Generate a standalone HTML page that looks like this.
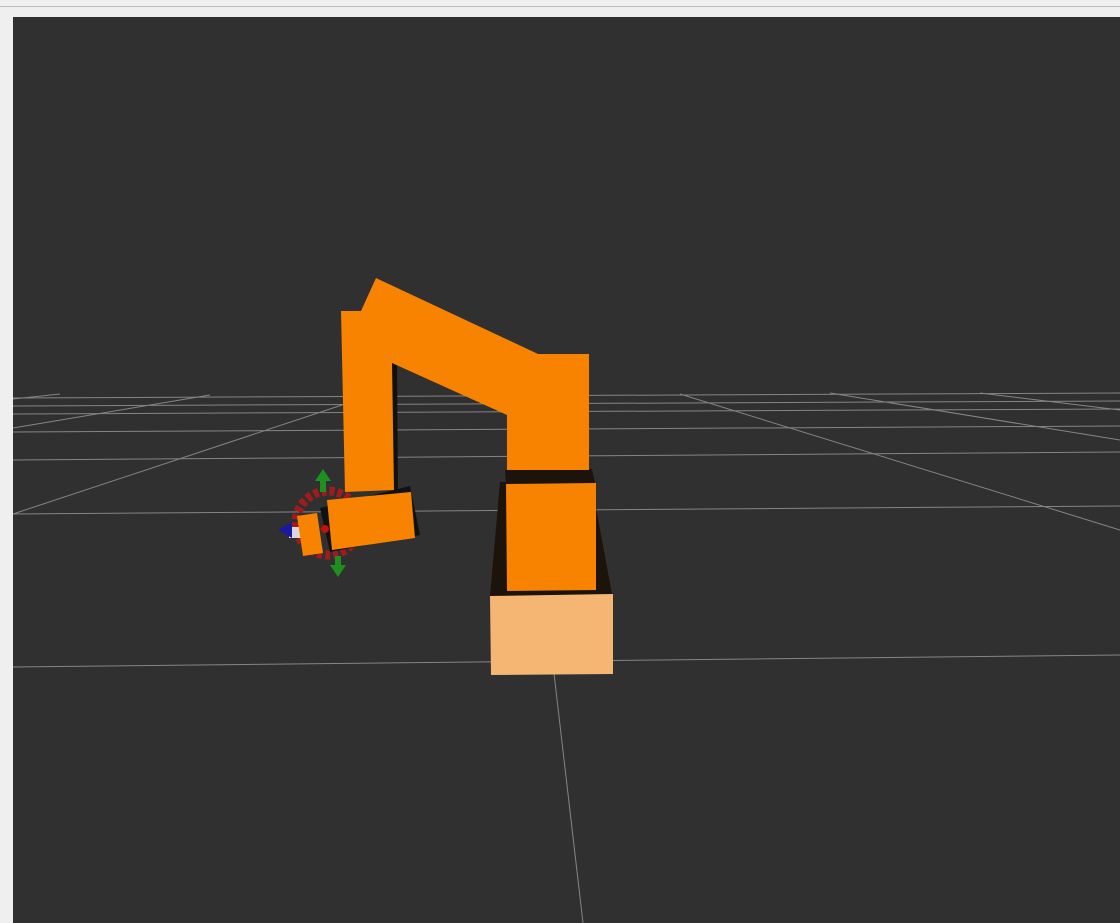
<!DOCTYPE html>
<html><head><style>
html,body{margin:0;padding:0;width:1120px;height:923px;overflow:hidden;background:#efefef;}
svg{position:absolute;left:0;top:0}
</style></head><body>
<svg width="1120" height="923" viewBox="0 0 1120 923">
<rect x="0" y="0" width="1120" height="923" fill="#efefef"/>
<line x1="0" y1="6.5" x2="1120" y2="6.5" stroke="#bdbdbd" stroke-width="1"/>
<rect x="13" y="17" width="1107" height="906" fill="#303030"/>
<g stroke="#858585" stroke-width="1" fill="none">
<line x1="13" y1="398" x2="1120" y2="393"/>
<line x1="13" y1="406" x2="1120" y2="401"/>
<line x1="13" y1="414" x2="1120" y2="409"/>
<line x1="13" y1="432" x2="1120" y2="426"/>
<line x1="13" y1="460" x2="1120" y2="452"/>
<line x1="13" y1="514" x2="1120" y2="506"/>
<line x1="13" y1="667" x2="1120" y2="655"/>
<line x1="13" y1="428" x2="210" y2="395"/>
<line x1="13" y1="514" x2="345" y2="404"/>
<line x1="680" y1="394" x2="1120" y2="530"/>
<line x1="830" y1="393" x2="1120" y2="440"/>
<line x1="980" y1="393" x2="1120" y2="410"/>
<line x1="13" y1="399" x2="60" y2="394"/>
<line x1="545" y1="596" x2="583" y2="923"/>
</g>
<polygon points="490,596 500,482 591,481 612,594" fill="#1c140a"/>
<polygon points="505,470 592,469 595,483 506,484" fill="#1c140a"/>
<polygon points="506,484 596,483 596,590 507,591" fill="#f88300"/>
<polygon points="490,596 613,594 613,674 491,675" fill="#f4b672"/>
<polygon points="392,363 397,363 398,490 393,490" fill="#111"/>
<polygon points="341,311 361,311 376,278 538,354 589,354 589,470 507,470 507,415 392,363 394,490 345,492" fill="#f88300"/>
<circle cx="328" cy="523" r="32" fill="none" stroke="#a01c1c" stroke-width="9" stroke-dasharray="5 3"/>
<polygon points="320,508 410,486 420,535 330,552" fill="#111"/>
<polygon points="327,500 411,492 415,538 332,550" fill="#f88300"/>
<rect x="289" y="527" width="12" height="11" fill="#d8d8e0"/>
<polygon points="278,530 292,522 292,538" fill="#1a1aa0"/>
<polygon points="297,516 317,513 323,553 303,556" fill="#f88300"/>
<polygon points="323,469 331,481 315,481" fill="#1f8f1f"/>
<rect x="320" y="480" width="6" height="12" fill="#1f8f1f"/>
<polygon points="338,577 346,565 330,565" fill="#1f8f1f"/>
<rect x="335" y="556" width="6" height="10" fill="#1f8f1f"/>
<circle cx="325" cy="529" r="4" fill="#c01010"/>
</svg>
</body></html>
